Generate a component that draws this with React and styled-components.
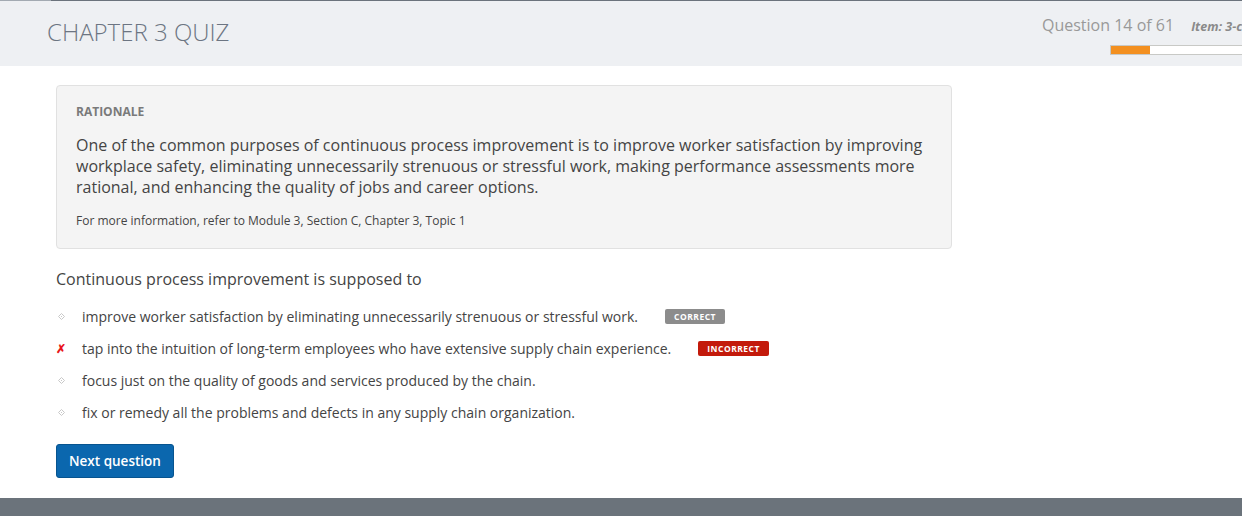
import React from 'react';
import styled, { createGlobalStyle } from 'styled-components';

const GlobalStyle = createGlobalStyle`
  html, body { margin: 0; padding: 0; background: #fff; }
  body { font-family: "Open Sans", "Liberation Sans", sans-serif; overflow: hidden; }
  * { box-sizing: border-box; }
`;

const Page = styled.div`
  width: 1242px;
  height: 516px;
  display: flex;
  flex-direction: column;
  overflow: hidden;
`;

const Header = styled.header`
  height: 66px;
  background: #eef0f3;
  border-top: 1px solid #6b737c;
  position: relative;
  display: flex;
  justify-content: space-between;
  padding-left: 47px;

  &::before {
    content: '';
    position: absolute;
    top: -1px;
    left: 0;
    width: 51px;
    height: 1px;
    background: #a3aab2;
  }
`;

const Title = styled.h1`
  margin: 15px 0 0;
  font-size: 24px;
  font-weight: 300;
  color: #6c7582;
  line-height: 32px;
`;

const Progress = styled.div`
  display: flex;
  flex-direction: column;
  padding-top: 13px;
  width: 200px;
`;

const ProgressLabel = styled.div`
  display: flex;
  align-items: baseline;
  white-space: nowrap;
  font-size: 16px;
  color: #999;
  line-height: 22px;
`;

const ItemTag = styled.span`
  margin-left: 17px;
  font-size: 12.5px;
  font-weight: 700;
  font-style: italic;
  color: #8a8a8a;
`;

const Bar = styled.div`
  margin: 7px 0 0 68px;
  height: 10px;
  border: 1px solid #c8c9c6;
  border-right: none;
  background: #fff;
`;

const Fill = styled.div`
  height: 100%;
  background: #f39020;
`;

const Main = styled.main`
  flex: 1;
  padding: 19px 0 0 56px;
`;

const Rationale = styled.section`
  width: 896px;
  background: #f4f4f4;
  border: 1px solid #e1e1e1;
  border-radius: 4px;
  padding: 17px 19px 18px;
`;

const Label = styled.div`
  font-size: 12px;
  font-weight: 700;
  color: #7a7a7a;
  line-height: 18px;
`;

const Body = styled.p`
  margin: 14px 0 0;
  font-size: 16px;
  line-height: 21px;
  color: #444;
`;

const Ref = styled.p`
  margin: 14px 0 0;
  font-size: 12px;
  line-height: 18px;
  color: #444;
`;

const Question = styled.p`
  margin: 18px 0 0;
  font-size: 16px;
  line-height: 24px;
  color: #444;
`;

const Options = styled.ul`
  list-style: none;
  margin: 9px 0 0;
  padding: 0;
`;

const Option = styled.li`
  display: flex;
  align-items: center;
  height: 32px;
  font-size: 14px;
  color: #444;
`;

const Marker = styled.span`
  width: 26px;
  display: flex;
  align-items: center;
  padding-left: ${p => (p.$wrong ? '0' : '2px')};
  color: ${p => (p.$wrong ? '#e8161b' : '#c4c4c4')};
  font-size: ${p => (p.$wrong ? '12px' : '9px')};
  font-weight: 700;
`;

const Badge = styled.span`
  margin-left: ${p => p.$gap}px;
  height: 15px;
  padding: 0 9px;
  display: inline-flex;
  align-items: center;
  border-radius: 2px;
  background: ${p => (p.$bad ? '#c31a0b' : '#8c8c8c')};
  color: #fff;
  font-size: 8.5px;
  font-weight: 700;
  letter-spacing: 0.5px;
`;

const NextButton = styled.button`
  margin-top: 16px;
  height: 34px;
  padding: 0 12px;
  background: #0b67ae;
  border: 1px solid #07548f;
  border-radius: 3px;
  color: #fff;
  font-family: inherit;
  font-size: 13.5px;
  font-weight: 600;
  cursor: pointer;
`;

const Footer = styled.footer`
  height: 18px;
  background: #6b737b;
`;

const Diamond = () => (
  <svg width="7" height="7" viewBox="0 0 7 7">
    <path d="M3.5 0.5 L6.5 3.5 L3.5 6.5 L0.5 3.5 Z" fill="none" stroke="#c8c8c8" strokeWidth="1" />
    <rect x="3" y="3" width="1" height="1" fill="#c8c8c8" />
  </svg>
);

const options = [
  { text: 'improve worker satisfaction by eliminating unnecessarily strenuous or stressful work.', badge: 'CORRECT', gap: 27 },
  { text: 'tap into the intuition of long-term employees who have extensive supply chain experience.', badge: 'INCORRECT', wrong: true, gap: 27 },
  { text: 'focus just on the quality of goods and services produced by the chain.' },
  { text: 'fix or remedy all the problems and defects in any supply chain organization.' },
];

export default function App() {
  return (
    <Page>
      <GlobalStyle />
      <Header>
        <Title>CHAPTER 3 QUIZ</Title>
        <Progress>
          <ProgressLabel>
            Question 14 of 61
            <ItemTag>Item: 3-c</ItemTag>
          </ProgressLabel>
          <Bar>
            <Fill style={{ width: `${(14 / 61) * 170}px` }} />
          </Bar>
        </Progress>
      </Header>
      <Main>
        <Rationale>
          <Label>RATIONALE</Label>
          <Body>
            One of the common purposes of continuous process improvement is to improve worker satisfaction by improving
            workplace safety, eliminating unnecessarily strenuous or stressful work, making performance assessments more
            rational, and enhancing the quality of jobs and career options.
          </Body>
          <Ref>For more information, refer to Module 3, Section C, Chapter 3, Topic 1</Ref>
        </Rationale>
        <Question>Continuous process improvement is supposed to</Question>
        <Options>
          {options.map(o => (
            <Option key={o.text}>
              <Marker $wrong={o.wrong}>{o.wrong ? '✗' : <Diamond />}</Marker>
              {o.text}
              {o.badge && (
                <Badge $bad={o.wrong} $gap={o.gap}>
                  {o.badge}
                </Badge>
              )}
            </Option>
          ))}
        </Options>
        <NextButton>Next question</NextButton>
      </Main>
      <Footer />
    </Page>
  );
}
